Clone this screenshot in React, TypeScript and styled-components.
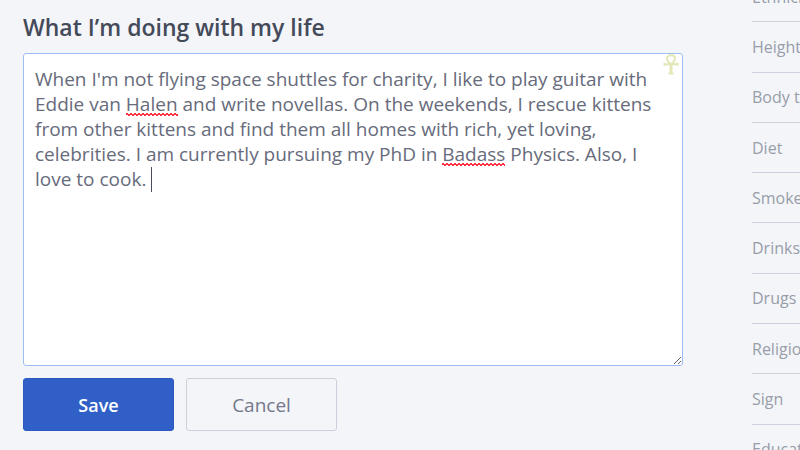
import React, { useState } from "react";
import styled, { createGlobalStyle } from "styled-components";

const GlobalStyle = createGlobalStyle`
  *, *::before, *::after { box-sizing: border-box; }
  body {
    margin: 0;
    background: #f3f5f9;
    color: #676b7b;
    font-family: "Open Sans", "Noto Sans", sans-serif;
    overflow: hidden;
  }
`;

const Page = styled.div`
  display: flex;
  height: 100vh;
  gap: 69px;
  padding-left: 23px;
  overflow: hidden;
`;

const Form = styled.form`
  flex: 1;
  min-width: 0;
`;

const Title = styled.label`
  display: block;
  padding-top: 10px;
  margin-bottom: 9px;
  color: #454a59;
  font-size: 23px;
  font-weight: 550;
  line-height: 34px;
`;

const Editor = styled.div`
  display: grid;
  position: relative;
  background: #ffffff;
  border-radius: 3px;
  font-size: 19px;
  line-height: 25px;

  > * {
    grid-area: 1 / 1;
    padding: 13px 24px 12px 11px;
    border: 1px solid transparent;
    white-space: pre-wrap;
    overflow-wrap: break-word;
  }
`;

const SpellLayer = styled.div`
  visibility: hidden;
  pointer-events: none;
`;

const Misspelled = styled.span`
  position: relative;

  &::after {
    content: "";
    position: absolute;
    left: 0;
    right: 0;
    bottom: 1px;
    height: 3px;
    background:
      linear-gradient(45deg, transparent 38%, #ff3040 38% 62%, transparent 62%) 0 0 / 4px 3px,
      linear-gradient(-45deg, transparent 38%, #ff3040 38% 62%, transparent 62%) 2px 0 / 4px 3px;
    visibility: visible;
  }
`;

const Caret = styled.span`
  display: inline-block;
  width: 1px;
  height: 25px;
  background: #4a4e5a;
  vertical-align: top;
  visibility: visible;
`;

const TextArea = styled.textarea`
  position: relative;
  display: block;
  width: 100%;
  height: 313px;
  margin: 0;
  background: transparent;
  color: inherit;
  caret-color: transparent;
  font: inherit;
  outline: none;
  resize: vertical;

  && {
    border: 1px solid #9dbcf0;
    border-radius: 3px;
  }
`;

const Marker = styled.svg`
  position: absolute;
  top: 1px;
  right: 4px;
  width: 16px;
  height: 21px;

  && {
    padding: 0;
    border: 0;
  }
`;

const Actions = styled.div`
  display: flex;
  gap: 12px;
  margin-top: 12px;
`;

const Button = styled.button<{ $primary?: boolean }>`
  width: 151px;
  height: 53px;
  padding: 0;
  border: 1px solid ${(p) => (p.$primary ? "#2c59c2" : "#cdd0dc")};
  border-radius: 3px;
  background: ${(p) => (p.$primary ? "#305fc8" : "transparent")};
  color: ${(p) => (p.$primary ? "#ffffff" : "#74788a")};
  font-family: inherit;
  font-size: ${(p) => (p.$primary ? "18px" : "19px")};
  font-weight: ${(p) => (p.$primary ? 600 : 400)};
  cursor: pointer;
`;

const Details = styled.ul`
  flex: 0 0 48px;
  display: grid;
  grid-auto-rows: 1fr;
  height: 503px;
  margin: -28px 0 0;
  padding: 0;
  list-style: none;
  overflow: hidden;
`;

const Detail = styled.li`
  display: flex;
  align-items: center;
  border-bottom: 1px solid #cdd0dd;
  color: #989da9;
  font-size: 16px;
  white-space: nowrap;
`;

const unknownWords = ["Halen", "Badass"];

const details = [
  "Ethnicity",
  "Height",
  "Body type",
  "Diet",
  "Smokes",
  "Drinks",
  "Drugs",
  "Religion",
  "Sign",
  "Education",
];

const initialText =
  "When I'm not flying space shuttles for charity, I like to play guitar with Eddie van Halen and write novellas. On the weekends, I rescue kittens from other kittens and find them all homes with rich, yet loving, celebrities. I am currently pursuing my PhD in Badass Physics. Also, I love to cook. ";

export default function App() {
  const [text, setText] = useState(initialText);
  const parts = text.split(new RegExp(`(${unknownWords.join("|")})`));

  return (
    <>
      <GlobalStyle />
      <Page>
        <Form onSubmit={(e) => e.preventDefault()}>
          <Title htmlFor="essay">What I’m doing with my life</Title>
          <Editor>
            <SpellLayer aria-hidden="true">
              {parts.map((part, i) =>
                unknownWords.includes(part) ? (
                  <Misspelled key={i}>{part}</Misspelled>
                ) : (
                  <React.Fragment key={i}>{part}</React.Fragment>
                )
              )}
              <Caret />
            </SpellLayer>
            <TextArea
              id="essay"
              spellCheck={false}
              value={text}
              onChange={(e) => setText(e.target.value)}
            />
            <Marker viewBox="0 0 16 21" fill="none" aria-hidden="true">
              <path
                d="M8 10.500C5.500 8.500 4 6.500 4 4.500C4 2.300 5.700 1.300 8 1.300S12 2.300 12 4.500C12 6.500 10.500 8.500 8 10.500ZM1.500 8.800V11.800M14.500 8.800V11.800M1.500 10.300H14.500M5.500 19.500H10.500"
                stroke="#e3e7b5"
                strokeWidth="2"
              />
              <path d="M8 10.500V19.500" stroke="#e3e7b5" strokeWidth="3" />
            </Marker>
          </Editor>
          <Actions>
            <Button type="submit" $primary>
              Save
            </Button>
            <Button type="button">Cancel</Button>
          </Actions>
        </Form>
        <Details>
          {details.map((name) => (
            <Detail key={name}>{name}</Detail>
          ))}
        </Details>
      </Page>
    </>
  );
}
